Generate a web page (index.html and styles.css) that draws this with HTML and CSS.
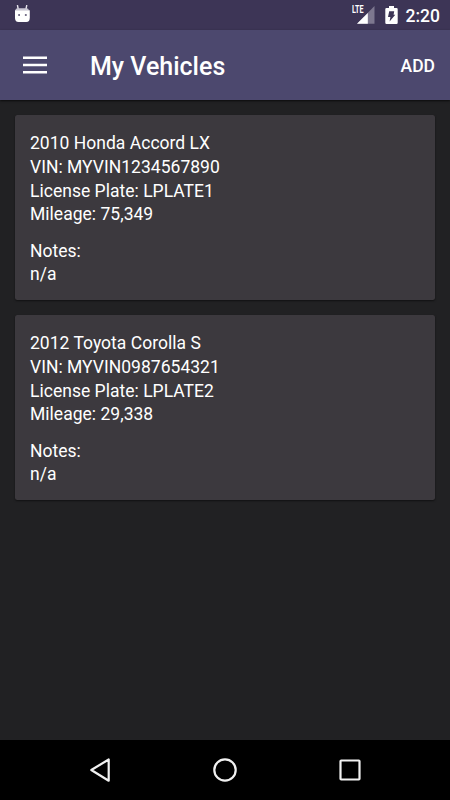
FILE: index.html
```html
<!DOCTYPE html>
<html lang="en">
<head>
<meta charset="utf-8">
<title>My Vehicles</title>
<link rel="stylesheet" href="styles.css">
</head>
<body>
<div class="statusbar">
  <svg class="debug" width="16" height="20" viewBox="0 0 16 20"><path d="M4.200 4L3.400 0M12 4l.8-4" stroke="#e4e2ea" stroke-width="1.400"/><path d="M1.200 5.500Q1.500 3.300 3.800 3.300h8.600Q14.700 3.300 15 5.500z" fill="#cbc8d5"/><path d="M1 5.200h14.800v7.600q0 4.200-3.500 4.200H4.500Q1 17 1 12.800z" fill="#fff"/><path d="M4.200 9.100h1.800v1.800H4.200zM10.900 9.100h1.800v1.800h-1.800z" fill="#77718a"/></svg>
  <div class="status-right">
    <span class="lte">LTE</span>
    <svg class="signal" width="18" height="18" viewBox="0 0 18 18"><path d="M17.500 0v17.800H0z" fill="#7d778f"/><path d="M10.800 7v10.800H0z" fill="#fff"/></svg>
    <svg class="battery" width="13" height="18" viewBox="0 0 13 18"><path d="M4 0h5v2h2.500q1.200 0 1.200 1.200v13.500q0 1.200-1.200 1.200h-10Q.3 17.900.3 16.700V3.200Q.3 2 1.500 2H4z" fill="#fff"/><path d="M4.200 5.200h5L8.600 8.700h1.700L4.600 15.600l.8-4.500H3z" fill="#3d3556"/></svg>
    <span class="time">2:20</span>
  </div>
</div>
<header class="toolbar">
  <svg class="menu" width="24" height="18" viewBox="0 0 24 18"><path d="M0 1.700h24M0 9h24M0 16.200h24" stroke="#fff" stroke-width="2.500"/></svg>
  <h1>My Vehicles</h1>
  <span class="add">ADD</span>
</header>
<main>
  <section class="card">
    <p>2010 Honda Accord LX</p>
    <p>VIN: MYVIN1234567890</p>
    <p>License Plate: LPLATE1</p>
    <p>Mileage: 75,349</p>
    <p class="notes">Notes:</p>
    <p>n/a</p>
  </section>
  <section class="card">
    <p>2012 Toyota Corolla S</p>
    <p>VIN: MYVIN0987654321</p>
    <p>License Plate: LPLATE2</p>
    <p>Mileage: 29,338</p>
    <p class="notes">Notes:</p>
    <p>n/a</p>
  </section>
</main>
<nav class="navbar">
  <svg width="26" height="26" viewBox="0 0 26 26"><path d="M21.700 2.500v21.200L4.300 13z"/></svg>
  <svg width="26" height="26" viewBox="0 0 26 26"><circle cx="13" cy="13" r="10.700"/></svg>
  <svg width="26" height="26" viewBox="0 0 26 26"><rect x="3.500" y="3.500" width="19" height="19" rx=".7"/></svg>
</nav>
</body>
</html>
```
FILE: styles.css
```css
* { box-sizing: border-box; }
body {
  margin: 0;
  width: 450px;
  height: 800px;
  overflow: hidden;
  display: flex;
  flex-direction: column;
  background: #212123;
  color: #fff;
  font-family: Roboto, sans-serif;
  font-size: 17.5px;
}
h1, p { margin: 0; }
svg { display: block; flex: none; }
.statusbar {
  height: 30px;
  flex: none;
  display: flex;
  justify-content: space-between;
  padding: 0 10px 0 14px;
  background: #3d3556;
}
.debug { margin-top: 5px; }
.status-right { display: flex; }
.lte {
  font-size: 10px;
  font-weight: 700;
  line-height: 12px;
  width: 12px;
  margin: 4px 1px 0 -1px;
  transform: scaleX(.72);
  transform-origin: left;
}
.signal { margin: 6px 0 0 -8px; }
.battery { margin: 6px 0 0 10px; }
.time { margin-left: 8px; line-height: 32px; font-weight: 500; }
.toolbar {
  height: 70px;
  flex: none;
  display: flex;
  align-items: center;
  padding: 0 15px 0 23px;
  background: #4c486e;
  box-shadow: 0 1px 2px rgba(0, 0, 0, .7);
}
h1 {
  margin-left: 43px;
  font-size: 25px;
  font-weight: 500;
  line-height: 30px;
  padding-top: 3px;
}
.add { margin-left: auto; font-weight: 500; padding-top: 1px; }
main {
  flex: 1;
  display: flex;
  flex-direction: column;
  gap: 15px;
  padding: 15px;
}
.card {
  height: 185px;
  padding: 17px 15px 0;
  border-radius: 2.5px;
  background: #3c393e;
  box-shadow: 0 1px 2px rgba(0, 0, 0, .5);
  line-height: 23.8px;
  letter-spacing: .02px;
}
.notes { margin-top: 12.5px; }
.navbar {
  height: 60px;
  flex: none;
  display: flex;
  align-items: center;
  justify-content: space-between;
  padding: 0 87px;
  background: #000;
}
.navbar svg {
  fill: none;
  stroke: #f1f1f1;
  stroke-width: 2.2;
  stroke-linejoin: round;
}
```
